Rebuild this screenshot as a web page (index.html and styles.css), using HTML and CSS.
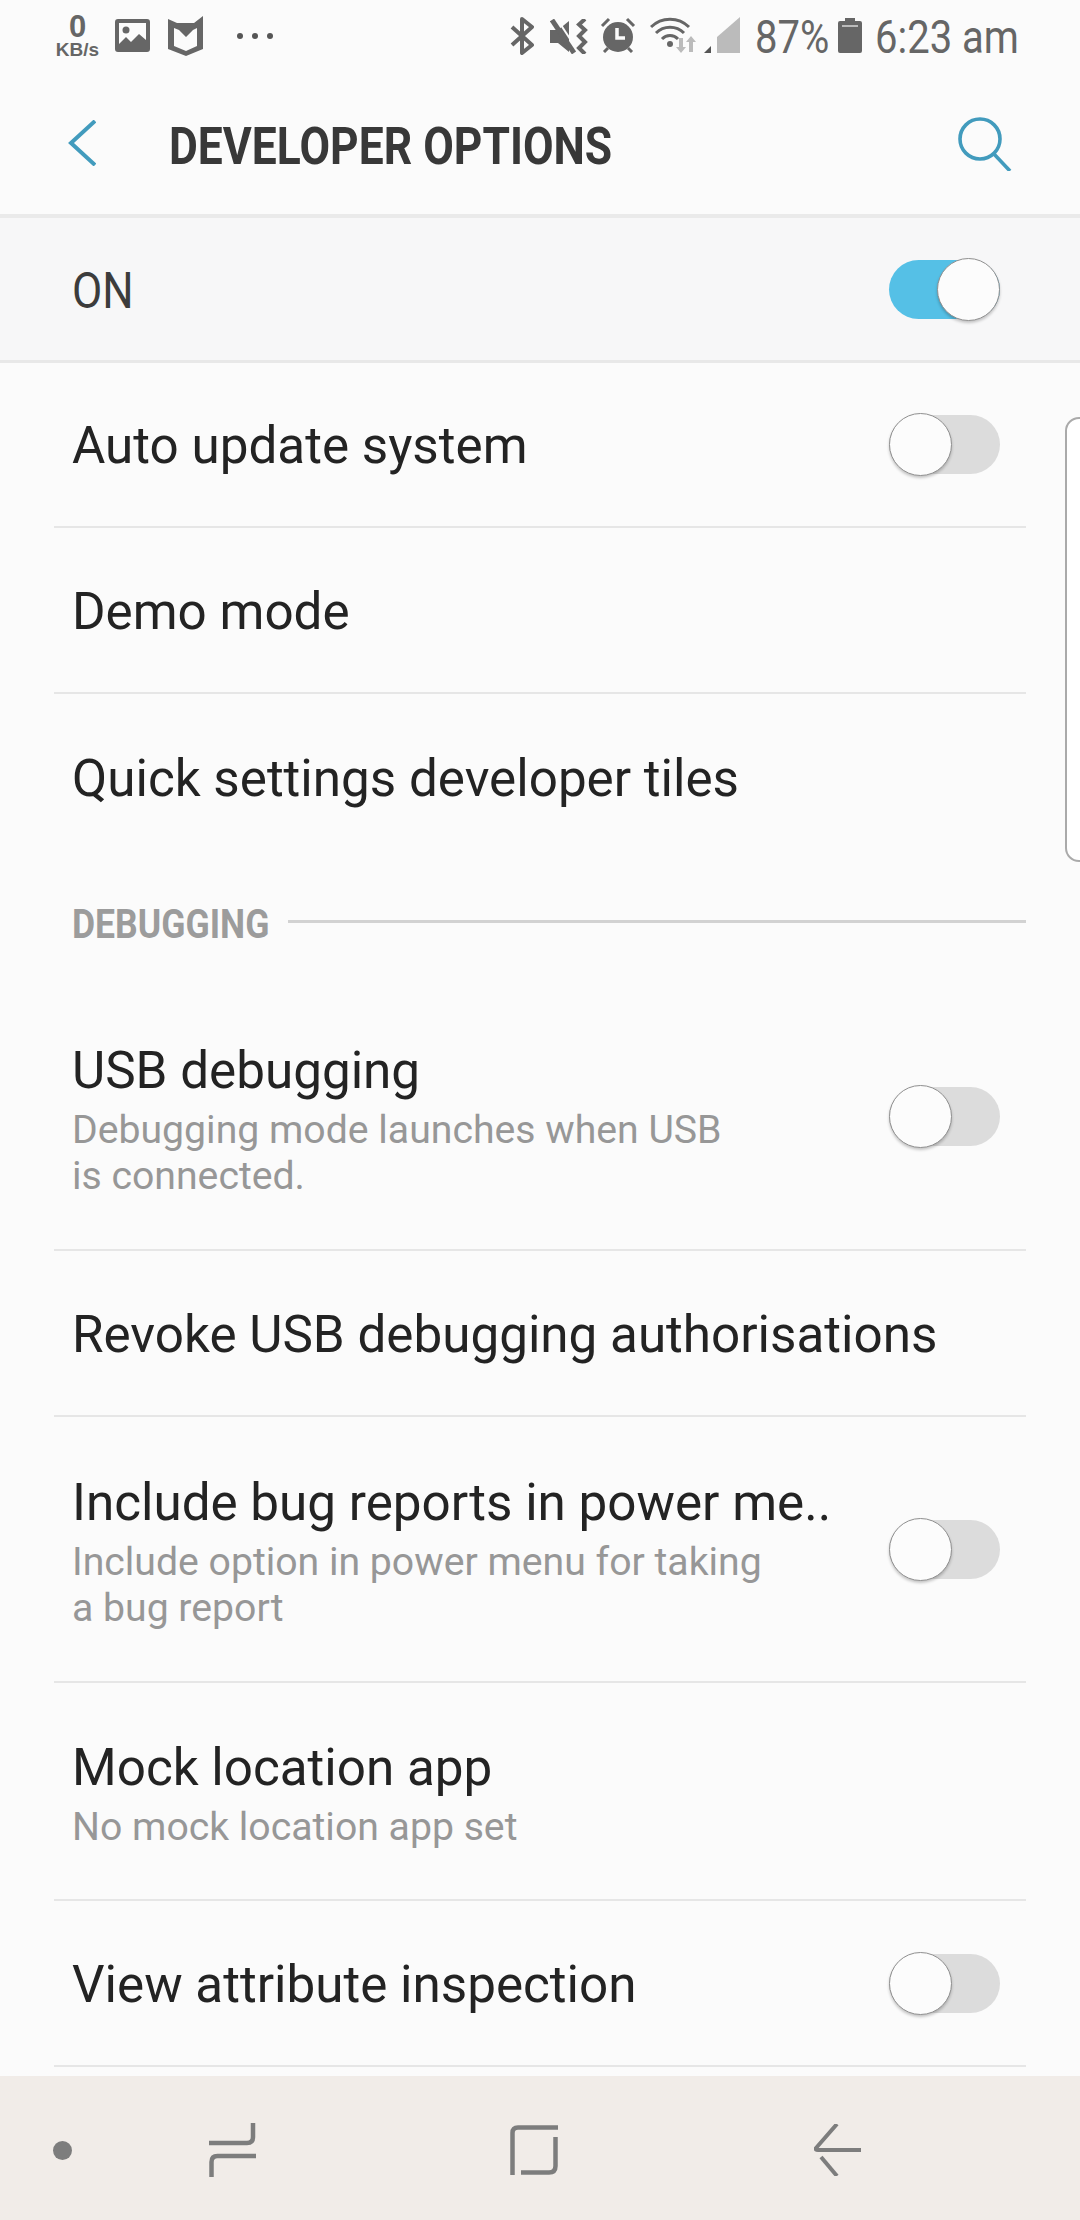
FILE: index.html
```html
<!DOCTYPE html>
<html lang="en">
<head>
<meta charset="utf-8">
<title>Developer options</title>
<link rel="stylesheet" href="styles.css">
</head>
<body>
<div class="screen">
  <div class="status">
    <div class="status-left">
      <div class="kb"><span class="kb-n">0</span><span class="kb-u">KB/s</span></div>
      <svg class="ic-image" width="35" height="33" viewBox="0 0 35 33"><path fill="#666" fill-rule="evenodd" d="M3 0h29a3 3 0 0 1 3 3v27a3 3 0 0 1-3 3H3a3 3 0 0 1-3-3V3a3 3 0 0 1 3-3zM4 4v21l7-7 5 5 8-8 7 6V4z"/><circle cx="11" cy="11" r="3.500" fill="#666"/></svg>
      <svg class="ic-shield" width="35" height="40" viewBox="0 0 35 40"><path fill="#666" fill-rule="evenodd" d="M0 3l9 4h17l9-7v33l-17 7-18-7zM6 12v18l12 5 11-5V12l-4 2-7 7-7-7z"/></svg>
      <div class="dots"><i></i><i></i><i></i></div>
    </div>
    <div class="status-right">
      <svg class="s-bt" width="24" height="38" viewBox="0 0 24 38"><path fill="none" stroke="#666" stroke-width="4" stroke-linejoin="round" d="M2 10l20 18-10 8V2l10 8L2 28"/></svg>
      <svg class="s-mute" width="38" height="35" viewBox="0 0 38 35"><path fill="#666" d="M0 11h8L19 2v31L8 24H0z"/><path stroke="#666" stroke-width="5" d="M2 1l22 33"/><path stroke="#fbfbfb" stroke-width="2" d="M7 0l21 32"/><path fill="none" stroke="#666" stroke-width="4" d="M35 0l-6 5.500 6 5.500-6 6 6 6-6 6 6 6"/></svg>
      <svg class="s-alarm" width="36" height="36" viewBox="0 0 36 36"><circle cx="18" cy="20" r="15" fill="#666"/><path fill="none" stroke="#fbfbfb" stroke-width="3.500" d="M17 11v10h8"/><path stroke="#666" stroke-width="3" d="M2 9l7-7M34 9l-7-7M4 35l4-4M32 35l-4-4"/></svg>
      <svg class="s-wifi" width="48" height="36" viewBox="0 0 48 36"><path fill="none" stroke="#666" stroke-width="3" d="M1 10a27 27 0 0 1 38 0M6 16a20 20 0 0 1 28 0M12 22a11 11 0 0 1 16 0"/><circle cx="20" cy="27" r="3" fill="#666"/><path fill="#bbb" d="M29 21h4v9h3l-5 6-5-6h3zM39 35v-10h-3l5-6 5 6h-3v10z"/></svg>
      <svg class="s-signal" width="36" height="36" viewBox="0 0 36 36"><path fill="#bbb" d="M36 0v36H13V20z"/><path fill="#555" d="M0 36l7-7v7z"/></svg>
      <span class="st-text pct">87%</span>
      <svg class="s-batt" width="24" height="35" viewBox="0 0 24 35"><path fill="#666" d="M7 0h10v3h5a2 2 0 0 1 2 2v28a2 2 0 0 1-2 2H2a2 2 0 0 1-2-2V5a2 2 0 0 1 2-2h5z"/><path fill="#bbb" d="M4 7h16v2H4z"/></svg>
      <span class="st-text time">6:23 am</span>
    </div>
  </div>

  <header class="appbar">
    <svg class="back" width="28" height="46" viewBox="0 0 28 46"><path fill="none" stroke="#429bbd" stroke-width="4" d="M27 1L3 23l24 22"/></svg>
    <h1 class="title">DEVELOPER OPTIONS</h1>
    <svg class="search" width="54" height="54" viewBox="0 0 54 54"><circle cx="22" cy="22" r="20" fill="none" stroke="#429bbd" stroke-width="3.600"/><path stroke="#429bbd" stroke-width="3.600" d="M36 37l16 17"/></svg>
  </header>

  <div class="master">
    <span class="master-label">ON</span>
    <span class="switch on"></span>
  </div>

  <main class="list">
    <div class="row r-a"><div class="txt"><div class="name">Auto update system</div></div><span class="switch"></span></div>
    <div class="row r-b"><div class="txt"><div class="name">Demo mode</div></div></div>
    <div class="row r-b last"><div class="txt"><div class="name">Quick settings developer tiles</div></div></div>

    <div class="section"><span class="section-label">DEBUGGING</span><span class="section-line"></span></div>

    <div class="row r-d"><div class="txt two"><div class="name">USB debugging</div><div class="sub">Debugging mode launches when USB<br>is connected.</div></div><span class="switch"></span></div>
    <div class="row r-b"><div class="txt"><div class="name">Revoke USB debugging authorisations</div></div></div>
    <div class="row r-e"><div class="txt two"><div class="name">Include bug reports in power me..</div><div class="sub">Include option in power menu for taking<br>a bug report</div></div><span class="switch"></span></div>
    <div class="row r-f"><div class="txt two"><div class="name">Mock location app</div><div class="sub">No mock location app set</div></div></div>
    <div class="row r-b"><div class="txt"><div class="name">View attribute inspection</div></div><span class="switch"></span></div>
  </main>

  <div class="scroll-thumb"></div>

  <nav class="navbar">
    <span class="nav-dot"></span>
    <svg class="nav-ic" width="47" height="54" viewBox="0 0 47 54"><path fill="none" stroke="#7d7d7d" stroke-width="4.500" d="M44 0v14q0 6-6 6H0"/><path fill="none" stroke="#7d7d7d" stroke-width="4.500" d="M2.500 54V39q0-6 6-6H47"/></svg>
    <svg class="nav-ic nav-home" width="48" height="50" viewBox="0 0 48 50"><path fill="none" stroke="#7d7d7d" stroke-width="4.500" d="M2.500 50V8q0-5.500 5.500-5.500H48"/><path fill="none" stroke="#7d7d7d" stroke-width="4.500" d="M45.500 12v29q0 6.500-6.500 6.500H11"/></svg>
    <svg class="nav-ic nav-back" width="47" height="52" viewBox="0 0 47 52"><path fill="none" stroke="#7d7d7d" stroke-width="4" d="M23 0L2 24q-1 2 2 2h43"/><path fill="none" stroke="#7d7d7d" stroke-width="4" d="M7 33l16 19"/></svg>
  </nav>
</div>
</body>
</html>
```
FILE: styles.css
```css
html, body { margin: 0; padding: 0; }
body { background: #fbfbfb; font-family: Roboto, "Liberation Sans", sans-serif; }
.screen { width: 1080px; height: 2220px; position: relative; overflow: hidden; background: #fbfbfb; }

.status { height: 72px; display: flex; justify-content: space-between; align-items: flex-start; padding: 16px 65px 0 56px; box-sizing: border-box; }
.status-left { display: flex; align-items: flex-start; }
.kb { width: 43px; margin-top: -2px; display: flex; flex-direction: column; align-items: center; color: #666; font-family: "Liberation Sans", sans-serif; font-weight: 700; line-height: 1; }
.kb-n { font-size: 31px; height: 26px; line-height: 26px; }
.kb-u { font-size: 19px; margin-top: 1px; line-height: 18px; }
.ic-image { display: block; margin: 3px 0 0 16px; }
.ic-shield { display: block; margin: 0 0 0 18px; }
.dots { display: flex; gap: 9px; margin: 17px 0 0 34px; }
.dots i { width: 6px; height: 6px; border-radius: 50%; background: #555; display: block; }

.status-right { display: flex; align-items: flex-start; }
.status-right svg { display: block; }
.s-bt { margin-top: 1px; }
.s-mute { margin: 3px 0 0 16px; }
.s-alarm { margin: 1px 0 0 12px; }
.s-wifi { margin: 1px 0 0 14px; }
.s-signal { margin: 1px 0 0 6px; }
.s-batt { margin: 2px 0 0 13px; }
.st-text { font-size: 46px; line-height: 42px; color: #666; transform: scaleX(.87); transform-origin: left center; display: block; white-space: nowrap; }
.pct { width: 70px; margin-left: 15px; }
.time { width: 140px; margin-left: 13px; }

.appbar { height: 146px; box-sizing: border-box; display: flex; align-items: center; padding: 0 0 0 68px; border-bottom: 4px solid #eaeaea; position: relative; }
.back { display: block; }
.title { margin: 8px 0 0 73px; font-size: 52px; line-height: 60px; font-weight: 700; color: #383838; transform: scaleX(.854); transform-origin: left center; white-space: nowrap; }
.search { position: absolute; left: 958px; top: 45px; }

.master { height: 145px; box-sizing: border-box; background: #f7f7f8; border-bottom: 3px solid #e8e8e8; display: flex; align-items: center; justify-content: space-between; padding: 0 80px 0 72px; }
.master-label { font-size: 50px; color: #3c3c3c; transform: scaleX(.88); transform-origin: left center; margin-top: 3px; }

.switch { width: 111px; height: 59px; border-radius: 30px; background: #dcdcdc; position: relative; display: block; flex: none; }
.switch::after { content: ""; position: absolute; left: 0; top: -2px; width: 63px; height: 63px; border-radius: 50%; background: #fcfcfc; border: 1px solid #909090; box-sizing: border-box; box-shadow: 0 2px 3px rgba(0,0,0,.22); }
.switch.on { background: #55c0e6; }
.switch.on::after { left: 48px; }

.list { display: flex; flex-direction: column; }
.row { margin: 0 54px; padding: 0 26px 0 18px; border-bottom: 2px solid #e6e6e6; display: flex; align-items: center; justify-content: space-between; box-sizing: border-box; }
.row.last { border-bottom: 0; }
.r-a { height: 165px; }
.r-b { height: 166px; }
.r-d { height: 267px; }
.r-e { height: 266px; }
.r-f { height: 218px; }
.txt { min-width: 0; padding-top: 3px; }
.txt.two { padding-top: 8px; }
.name { font-size: 51.2px; line-height: 56px; color: #232323; white-space: nowrap; }
.sub { font-size: 39.2px; line-height: 46px; color: #979797; margin-top: 8px; }

.section { height: 122px; margin: 0 54px 2px 72px; display: flex; align-items: center; gap: 18px; }
.section-label { font-size: 41px; font-weight: 700; color: #9c9c9c; transform: scaleX(.867); transform-origin: left center; width: 198px; white-space: nowrap; margin-top: 5px; }
.section-line { flex: 1; height: 3px; background: #d2d2d2; }

.scroll-thumb { position: absolute; left: 1065px; top: 417px; width: 40px; height: 445px; border: 2px solid #aaa; border-radius: 14px 0 0 14px; background: #fff; box-sizing: border-box; }

.navbar { position: absolute; left: 0; right: 0; bottom: 0; height: 144px; background: #f1ece8; }
.nav-dot { position: absolute; left: 53px; top: 65px; width: 19px; height: 19px; border-radius: 50%; background: #7d7d7d; }
.nav-ic { position: absolute; top: 47px; left: 209px; }
.nav-home { left: 510px; top: 49px; }
.nav-back { left: 814px; top: 48px; }
```
